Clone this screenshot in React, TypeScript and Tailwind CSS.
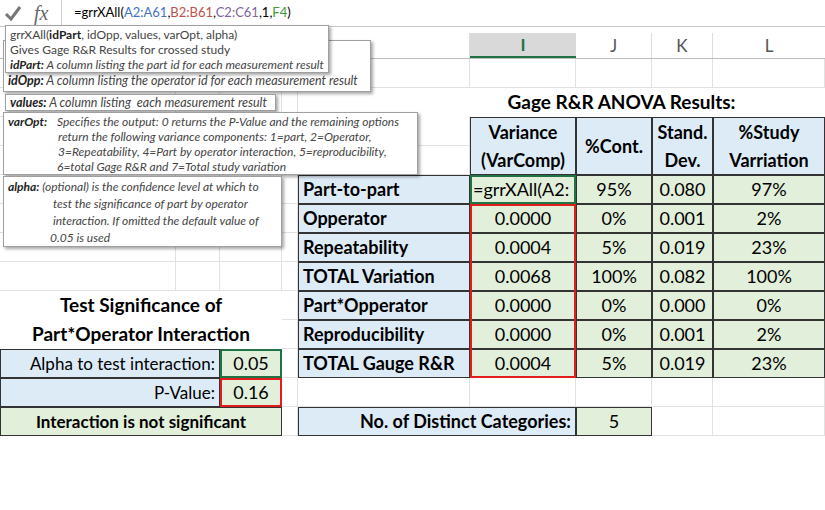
import React from "react";

const F = { fontFamily: "Lato, 'Open Sans', sans-serif" };

export default function App() {
  const empties = Array.from({ length: 13 * 9 });
  const lab = "bg-[#ddebf7] border border-[#333] font-bold text-[18px] pl-1 flex items-center text-black";
  const num = "bg-[#e2efda] border border-[#333] text-[18px] flex items-center justify-center text-black";
  return (
    <div className="w-[825px] h-[510px] bg-white relative overflow-hidden text-black" style={F}>
      {/* formula bar */}
      <div className="h-[27px] flex items-center border-b border-[#c6c6c6]">
        <div className="w-[62px] flex items-center gap-3 pl-1 border-r border-[#d0d0d0] h-full">
          <svg width="18" height="16" viewBox="0 0 18 16"><path d="M2 9 L7 14 L16 2" fill="none" stroke="#777" strokeWidth="3" /></svg>
          <span className="italic text-[20px] text-[#666]" style={{ fontFamily: "'Liberation Serif', serif" }}>fx</span>
        </div>
        <div className="pl-3 text-[13px]">
          =grrXAll(<span className="text-[#4472c4]">A2:A61</span>,<span className="text-[#c0504d]">B2:B61</span>,<span className="text-[#8064a2]">C2:C61</span>,1,<span className="text-[#3f9a2f]">F4</span>)
        </div>
      </div>
      {/* column headers */}
      <div className="mt-[6px] h-[26px] flex border-b border-[#bdbdbd] text-[17px] text-[#555]">
        <div className="w-[470px] border-r border-[#ddd]" />
        <div className="w-[106px] bg-[#d9d9d9] border-b-2 border-[#217346] flex items-center justify-center text-[#217346] font-bold">I</div>
        <div className="w-[76px] border-r border-[#ddd] flex items-center justify-center">J</div>
        <div className="w-[61px] border-r border-[#ddd] flex items-center justify-center">K</div>
        <div className="w-[112px] flex items-center justify-center">L</div>
      </div>
      {/* grid */}
      <div className="relative">
        <div className="grid grid-cols-[176px_44px_62px_16px_172px_106px_76px_61px_112px] grid-rows-[repeat(13,29px)]">
          {empties.map((_, i) => (
            <div key={i} className="border-r border-b border-[#e1e1e1]" />
          ))}
        </div>
        <div className="absolute inset-0 grid grid-cols-[176px_44px_62px_16px_172px_106px_76px_61px_112px] grid-rows-[repeat(13,29px)]">
          <div className="col-start-5 col-span-5 row-start-2 bg-white flex items-center justify-center font-bold text-[19px] pl-[120px]">Gage R&amp;R ANOVA Results:</div>
          <div className="col-start-6 row-start-3 row-span-2 bg-[#ddebf7] border border-[#333] font-bold text-[18px] flex flex-col items-center justify-center leading-[28px]"><span>Variance</span><span>(VarComp)</span></div>
          <div className="col-start-7 row-start-3 row-span-2 bg-[#ddebf7] border border-[#333] font-bold text-[18px] flex items-center justify-center">%Cont.</div>
          <div className="col-start-8 row-start-3 row-span-2 bg-[#ddebf7] border border-[#333] font-bold text-[18px] flex flex-col items-center justify-center leading-[28px]"><span>Stand.</span><span>Dev.</span></div>
          <div className="col-start-9 row-start-3 row-span-2 bg-[#ddebf7] border border-[#333] font-bold text-[18px] flex flex-col items-center justify-center leading-[28px]"><span>%Study</span><span>Varriation</span></div>

          <div className={`col-start-5 row-start-5 ${lab}`}>Part-to-part</div>
          <div className="col-start-6 row-start-5 bg-[#e2efda] border-2 border-[#217346] text-[18px] flex items-center overflow-hidden whitespace-nowrap pl-[1px]">=grrXAll(A2:</div>
          <div className={`col-start-7 row-start-5 ${num}`}>95%</div>
          <div className={`col-start-8 row-start-5 ${num}`}>0.080</div>
          <div className={`col-start-9 row-start-5 ${num}`}>97%</div>

          <div className={`col-start-5 row-start-6 ${lab}`}>Opperator</div>
          <div className={`col-start-6 row-start-6 ${num}`}>0.0000</div>
          <div className={`col-start-7 row-start-6 ${num}`}>0%</div>
          <div className={`col-start-8 row-start-6 ${num}`}>0.001</div>
          <div className={`col-start-9 row-start-6 ${num}`}>2%</div>

          <div className={`col-start-5 row-start-7 ${lab}`}>Repeatability</div>
          <div className={`col-start-6 row-start-7 ${num}`}>0.0004</div>
          <div className={`col-start-7 row-start-7 ${num}`}>5%</div>
          <div className={`col-start-8 row-start-7 ${num}`}>0.019</div>
          <div className={`col-start-9 row-start-7 ${num}`}>23%</div>

          <div className={`col-start-5 row-start-8 ${lab}`}>TOTAL Variation</div>
          <div className={`col-start-6 row-start-8 ${num}`}>0.0068</div>
          <div className={`col-start-7 row-start-8 ${num}`}>100%</div>
          <div className={`col-start-8 row-start-8 ${num}`}>0.082</div>
          <div className={`col-start-9 row-start-8 ${num}`}>100%</div>

          <div className={`col-start-5 row-start-9 ${lab}`}>Part*Opperator</div>
          <div className={`col-start-6 row-start-9 ${num}`}>0.0000</div>
          <div className={`col-start-7 row-start-9 ${num}`}>0%</div>
          <div className={`col-start-8 row-start-9 ${num}`}>0.000</div>
          <div className={`col-start-9 row-start-9 ${num}`}>0%</div>

          <div className={`col-start-5 row-start-10 ${lab}`}>Reproducibility</div>
          <div className={`col-start-6 row-start-10 ${num}`}>0.0000</div>
          <div className={`col-start-7 row-start-10 ${num}`}>0%</div>
          <div className={`col-start-8 row-start-10 ${num}`}>0.001</div>
          <div className={`col-start-9 row-start-10 ${num}`}>2%</div>

          <div className={`col-start-5 row-start-11 ${lab}`}>TOTAL Gauge R&amp;R</div>
          <div className={`col-start-6 row-start-11 ${num}`}>0.0004</div>
          <div className={`col-start-7 row-start-11 ${num}`}>5%</div>
          <div className={`col-start-8 row-start-11 ${num}`}>0.019</div>
          <div className={`col-start-9 row-start-11 ${num}`}>23%</div>

          <div className="col-start-6 row-start-6 row-span-6 border-2 border-[#e51c1c] z-10" />

          <div className="col-start-5 col-span-2 row-start-13 bg-[#ddebf7] border border-[#333] font-bold text-[18px] flex items-center justify-end pr-1">No. of Distinct Categories:</div>
          <div className={`col-start-7 row-start-13 ${num}`}>5</div>

          {/* left */}
          <div className="col-start-1 col-span-3 row-start-9 bg-white flex items-center justify-center font-bold text-[19px]">Test Significance of</div>
          <div className="col-start-1 col-span-3 row-start-10 bg-white flex items-center justify-center font-bold text-[19px]">Part*Operator Interaction</div>
          <div className="col-start-1 col-span-2 row-start-11 bg-[#ddebf7] border border-[#333] text-[17px] flex items-center justify-end pr-1">Alpha to test interaction:</div>
          <div className="col-start-3 row-start-11 bg-[#e2efda] border-2 border-[#217346] text-[18px] flex items-center justify-center">0.05</div>
          <div className="col-start-1 col-span-2 row-start-12 bg-[#ddebf7] border border-[#333] text-[17px] flex items-center justify-end pr-1">P-Value:</div>
          <div className="col-start-3 row-start-12 bg-[#e2efda] border-2 border-[#e51c1c] text-[18px] flex items-center justify-center">0.16</div>
          <div className="col-start-1 col-span-3 row-start-13 bg-[#e2efda] border border-[#333] font-bold text-[17px] flex items-center justify-center">Interaction is not significant</div>
        </div>
      </div>

      {/* tooltips */}
      <div className="absolute left-[3px] top-[40px] w-[368px] h-[52px] bg-white border border-[#a0a0a0] shadow-[2px_2px_3px_rgba(0,0,0,0.35)] text-[12.5px] leading-[16px] flex items-end px-1 pb-[2px] italic text-[#444]">
        <span><b className="text-[#222]">idOpp:</b> A column listing the operator id for each measurement result</span>
      </div>
      <div className="absolute left-[5px] top-[25px] w-[324px] h-[48px] bg-white border border-[#a0a0a0] shadow-[2px_2px_3px_rgba(0,0,0,0.35)] text-[12px] leading-[15px] px-1 pt-[1px] text-[#444]">
        <div>grrXAll(<b className="text-[#222]">idPart</b>, idOpp, values, varOpt, alpha)</div>
        <div>Gives Gage R&amp;R Results for crossed study</div>
        <div className="italic"><b className="text-[#222]">idPart:</b> A column listing the part id for each measurement result</div>
      </div>
      <div className="absolute left-[5px] top-[94px] w-[271px] h-[17px] bg-white border border-[#a0a0a0] shadow-[2px_2px_3px_rgba(0,0,0,0.35)] text-[12.5px] leading-[15px] px-1 italic text-[#444]">
        <b className="text-[#222]">values:</b> A column listing&nbsp; each measurement result
      </div>
      <div className="absolute left-[3px] top-[112px] w-[415px] h-[63px] bg-white border border-[#a0a0a0] shadow-[2px_2px_3px_rgba(0,0,0,0.35)] text-[12px] leading-[15px] px-1 pt-[1px] italic text-[#444] overflow-hidden">
        <div className="flex"><b className="text-[#222] w-[50px] shrink-0">varOpt:</b><span className="-ml-[1px]">Specifies the output: 0 returns the P-Value and the remaining options</span></div>
        <div className="pl-[50px]">return the following variance components: 1=part, 2=Operator,</div>
        <div className="pl-[50px]">3=Repeatability, 4=Part by operator interaction, 5=reproducibility,</div>
        <div className="pl-[49px]">6=total Gage R&amp;R and 7=Total study variation</div>
      </div>
      <div className="absolute left-[3px] top-[176px] w-[279px] h-[71px] bg-white border border-[#a0a0a0] shadow-[2px_2px_3px_rgba(0,0,0,0.35)] text-[12px] leading-[17px] px-1 pt-[1px] italic text-[#444]">
        <div><b className="text-[#222]">alpha:</b> (optional) is the confidence level at which to</div>
        <div className="pl-[45px]">test the significance of part by operator</div>
        <div className="pl-[45px]">interaction. If omitted the default value of</div>
        <div className="pl-[42px]">0.05 is used</div>
      </div>
    </div>
  );
}
